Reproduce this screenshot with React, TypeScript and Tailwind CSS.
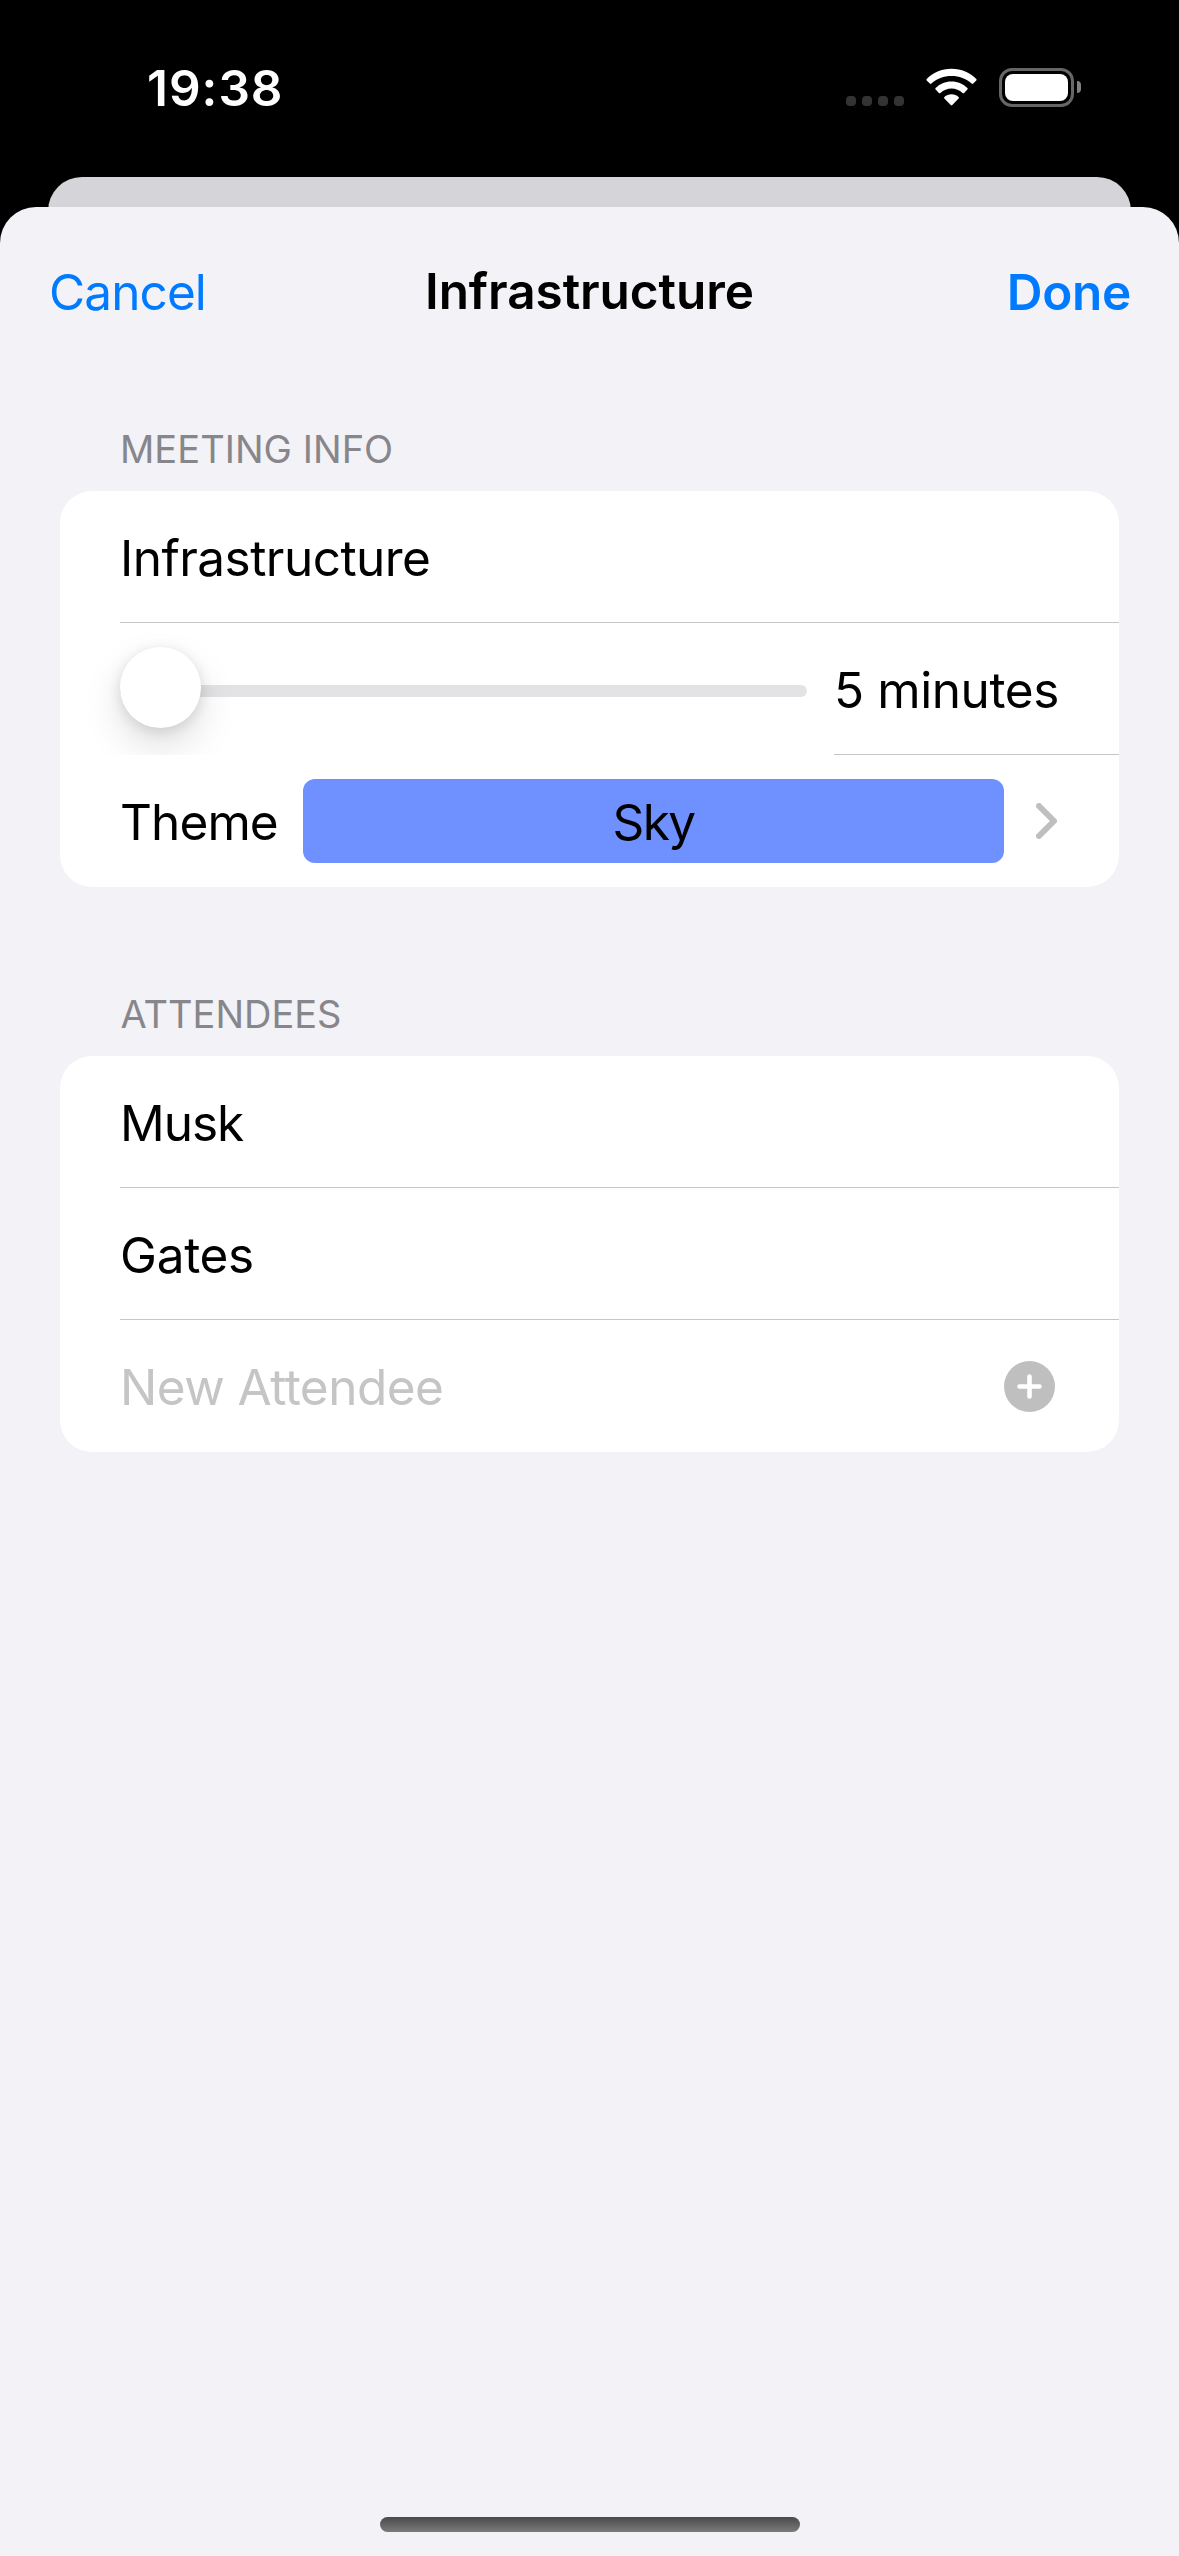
import React from "react";

const body = "text-[49.5px] leading-[60px] whitespace-nowrap";

function StatusBar() {
  return (
    <div className="flex h-[177px] shrink-0 items-start justify-between pr-[98px] pl-[147px]">
      <div className="mt-[58px] text-[49.5px] leading-[60px] font-semibold tracking-[1px] text-white">19:38</div>
      <div className="mt-[68px] flex h-[39px] items-start">
        <div className="mt-7 mr-[22px] flex gap-1.5">
          {[0, 1, 2, 3].map((i) => (
            <div key={i} className="size-2.5 rounded-[4px] bg-[#333333]" />
          ))}
        </div>
        <svg className="mr-[22px] h-[39px] w-[51px]" viewBox="0 0 51 39" fill="white">
          <path d="M25.5 0.8C35.4 0.8 44.2 4.7 50.3 11Q51 11.7 50.3 12.4L47.2 15.6Q46.4 16.4 45.6 15.6C40.2 10.6 33.2 8 25.5 8C17.8 8 10.8 10.6 5.4 15.6Q4.6 16.4 3.8 15.6L0.7 12.4Q0 11.7 0.7 11C6.8 4.7 15.6 0.8 25.5 0.8Z" />
          <path d="M25.5 13.5C31.8 13.5 37.4 16 41.4 20.1Q42.1 20.9 41.4 21.6L38.1 24.9Q37.3 25.6 36.5 24.9C33.5 22.2 29.7 20.6 25.5 20.6C21.3 20.6 17.5 22.2 14.5 24.9Q13.7 25.6 12.9 24.9L9.6 21.6Q8.9 20.9 9.6 20.1C13.6 16 19.2 13.5 25.5 13.5Z" />
          <path d="M25.5 26.3C28.2 26.3 30.7 27.3 32.6 29Q33.4 29.7 32.6 30.5L26.3 37Q25.5 37.8 24.7 37L18.4 30.5Q17.6 29.7 18.4 29C20.3 27.3 22.8 26.3 25.5 26.3Z" />
        </svg>
        <div className="flex h-[39px] w-[75px] rounded-[13px] border-[3px] border-[#666666] p-[3px]">
          <div className="flex-1 rounded-[8px] bg-white" />
        </div>
        <div className="mt-[13px] ml-[3px] h-3 w-1 rounded-r-full bg-[#808080]" />
      </div>
    </div>
  );
}

function NavBar() {
  return (
    <div className="grid h-[170px] grid-cols-[1fr_auto_1fr] items-center px-[48px]">
      <div className={`${body} pl-px tracking-[-0.9px] text-[#007aff]`}>Cancel</div>
      <div className={`${body} -mt-0.5 font-semibold tracking-[-0.07px]`}>Infrastructure</div>
      <div className={`${body} justify-self-end font-semibold tracking-[-0.3px] text-[#007aff]`}>Done</div>
    </div>
  );
}

function SectionTitle({ children, className }: { children: React.ReactNode; className: string }) {
  return <div className={`${className} text-[38px] leading-[46px] text-[#86868b]`}>{children}</div>;
}

function Card({ children }: { children: React.ReactNode }) {
  return <div className="mx-[60px] flex flex-col overflow-hidden rounded-[32px] bg-white">{children}</div>;
}

function Row({ children, last = false }: { children: React.ReactNode; last?: boolean }) {
  return (
    <div className={`ml-[60px] flex h-[132px] items-center pr-[60px] ${last ? "" : "border-b border-[#c6c6c8]"}`}>
      {children}
    </div>
  );
}

export default function App() {
  return (
    <div className="flex h-[2556px] w-[1179px] flex-col overflow-hidden bg-black font-['Inter',sans-serif] text-black">
      <StatusBar />
      <div className="mx-[48px] h-[70px] shrink-0 rounded-t-[34px] bg-[#d5d4d9]" />
      <div className="-mt-10 flex flex-1 flex-col rounded-t-[36px] bg-[#f2f2f7]">
        <NavBar />
        <SectionTitle className="mt-[49px] mb-[19px] pl-[120px] tracking-[0.04px]">MEETING INFO</SectionTitle>
        <Card>
          <Row>
            <div className={`${body} mt-[3px] tracking-[-0.54px]`}>Infrastructure</div>
          </Row>
          <div className="flex h-[132px] overflow-hidden">
            <div className="flex h-[132px] w-[774px] items-start overflow-hidden pl-[60px]">
              <div className="relative mt-[62px] h-3 w-[687px] rounded-full bg-[#e3e3e5]">
                <div className="absolute top-[-38px] left-0 size-[81px] rounded-full bg-white shadow-[0_18px_39px_rgba(0,0,0,0.13),0_3px_14px_rgba(0,0,0,0.12)]" />
              </div>
            </div>
            <div className="flex flex-1 items-center border-b border-[#c6c6c8]">
              <div className={`${body} mt-[3px] tracking-[-0.4px]`}>5 minutes</div>
            </div>
          </div>
          <Row last>
            <div className={`${body} mt-0.5 w-[183px] tracking-[-0.9px]`}>Theme</div>
            <div className="flex h-[84px] w-[701px] items-center justify-center rounded-[12px] bg-[#6e91ff]">
              <div className={`${body} mt-0.5 tracking-[-1.6px]`}>Sky</div>
            </div>
            <svg className="ml-8 h-9 w-[21px]" viewBox="0 0 21 36" fill="none" stroke="#bfbfbf" strokeWidth="6" strokeLinecap="round" strokeLinejoin="round">
              <path d="M3 3L18 18L3 33" />
            </svg>
          </Row>
        </Card>
        <SectionTitle className="mt-[104px] mb-[19px] pl-[120.5px] tracking-[0px]">ATTENDEES</SectionTitle>
        <Card>
          <Row>
            <div className={`${body} mt-[3px] tracking-[-1px]`}>Musk</div>
          </Row>
          <Row>
            <div className={`${body} mt-[3px] tracking-[-0.3px]`}>Gates</div>
          </Row>
          <Row last>
            <div className={`${body} mt-0.5 flex-1 tracking-[-0.53px] text-[#c5c5c7]`}>New Attendee</div>
            <svg className="mt-px mr-1 size-[51px]" viewBox="0 0 51 51">
              <circle cx="25.5" cy="25.5" r="25.5" fill="#bfbfbf" />
              <path d="M25.5 15.5V35.5M15.5 25.5H35.5" stroke="white" strokeWidth="4.6" strokeLinecap="round" />
            </svg>
          </Row>
        </Card>
        <div className="mx-auto mt-auto mb-6 h-[15px] w-[420px] rounded-full bg-linear-to-b from-[#4a4a4a] to-[#7b7b7c]" />
      </div>
    </div>
  );
}
